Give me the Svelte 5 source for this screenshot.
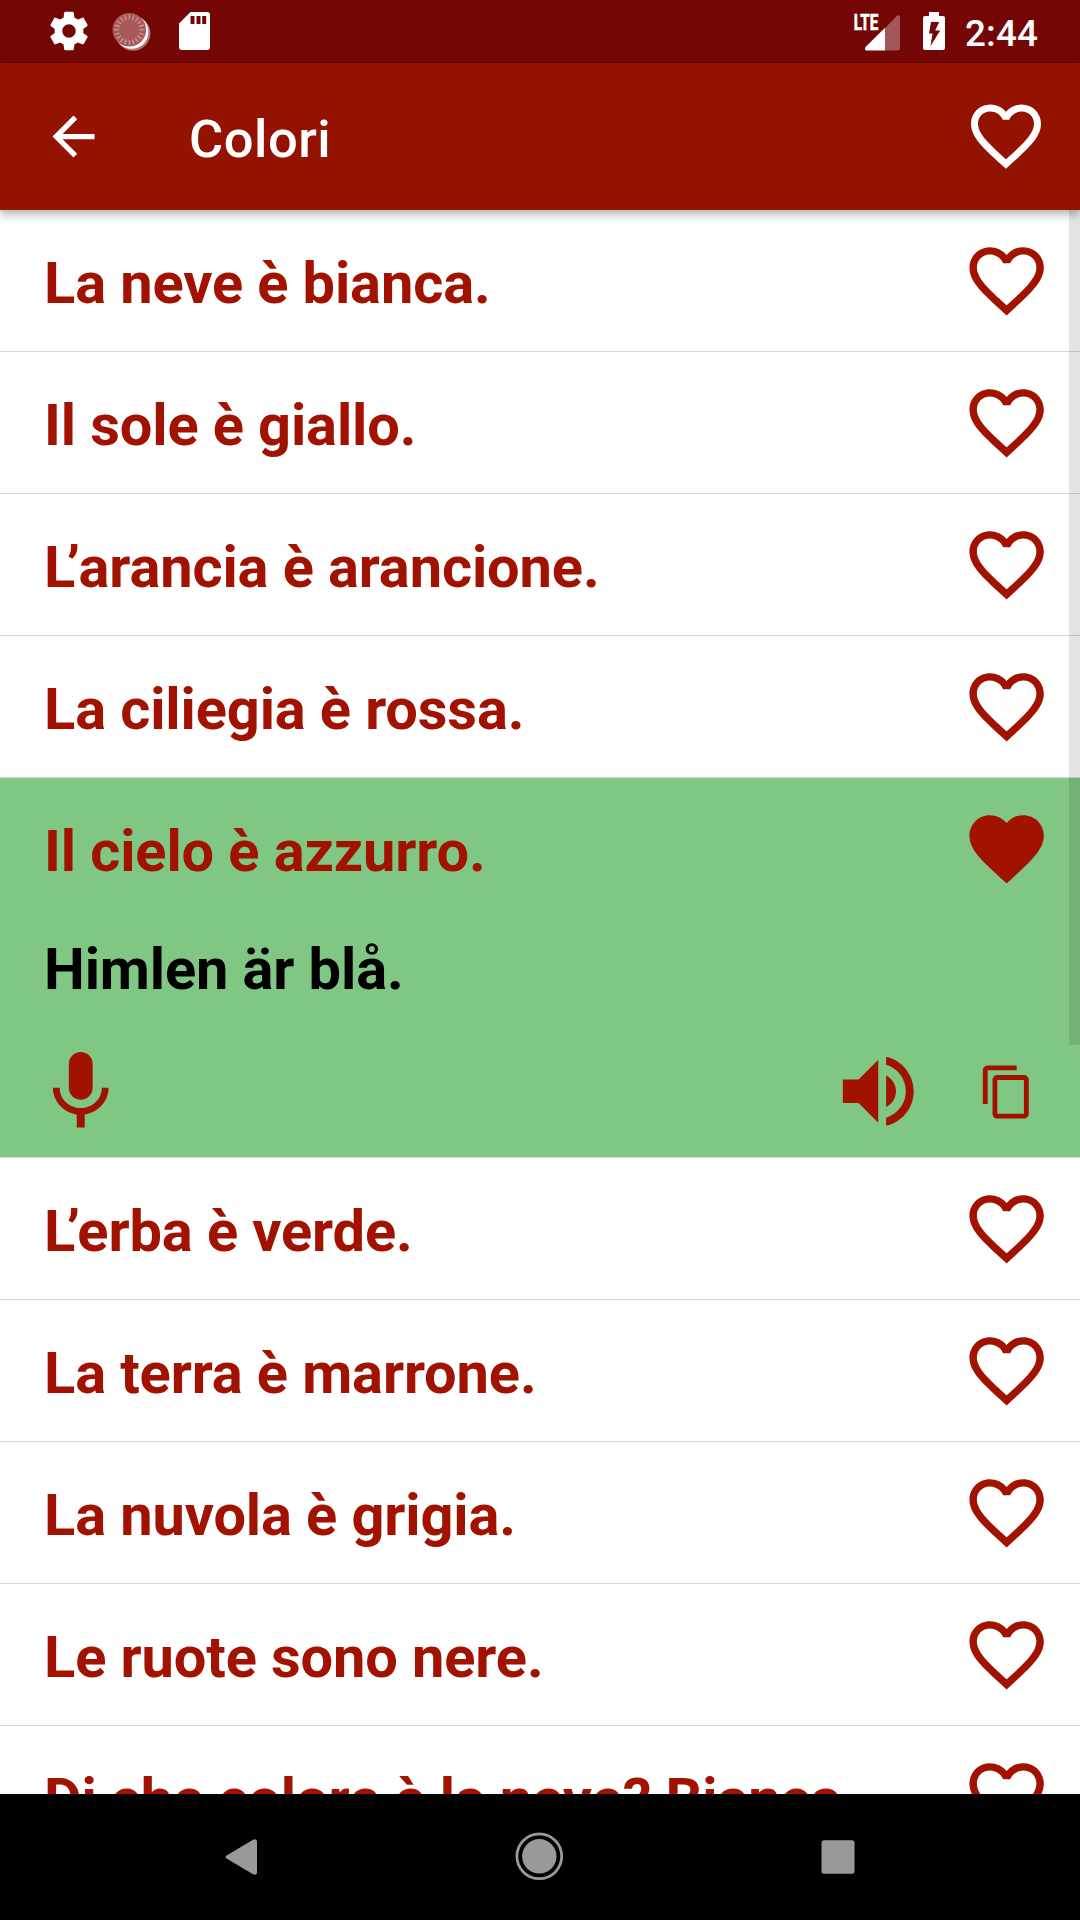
<script lang="ts">
  type Phrase = { text: string; translation?: string };

  const phrases: Phrase[] = [
    { text: 'La neve è bianca.' },
    { text: 'Il sole è giallo.' },
    { text: 'L’arancia è arancione.' },
    { text: 'La ciliegia è rossa.' },
    { text: 'Il cielo è azzurro.', translation: 'Himlen är blå.' },
    { text: 'L’erba è verde.' },
    { text: 'La terra è marrone.' },
    { text: 'La nuvola è grigia.' },
    { text: 'Le ruote sono nere.' },
    { text: 'Di che colore è la neve? Bianca.' },
  ];

  const ticks = Array.from({ length: 20 }, (_, i) => i * 18);
</script>

{#snippet heart(filled: boolean)}
  <svg class="heart" viewBox="0 0 24 24" aria-hidden="true">
    {#if filled}
      <path d="M12 21.35l-1.45-1.32C5.4 15.36 2 12.28 2 8.5 2 5.42 4.42 3 7.5 3c1.74 0 3.41.81 4.5 2.09C13.09 3.81 14.76 3 16.5 3 19.58 3 22 5.42 22 8.5c0 3.78-3.4 6.86-8.55 11.54L12 21.35z" />
    {:else}
      <path d="M16.5 3c-1.74 0-3.41.81-4.5 2.09C10.91 3.81 9.24 3 7.5 3 4.42 3 2 5.42 2 8.5c0 3.78 3.4 6.86 8.55 11.54L12 21.35l1.45-1.32C18.6 15.36 22 12.28 22 8.5 22 5.42 19.58 3 16.5 3zm-4.4 15.55l-.1.1-.1-.1C7.14 14.24 4 11.39 4 8.5 4 6.5 5.5 5 7.5 5c1.54 0 3.04.99 3.57 2.36h1.87C13.46 5.99 14.96 5 16.5 5c2 0 3.5 1.5 3.5 3.5 0 2.89-3.14 5.74-7.9 10.05z" />
    {/if}
  </svg>
{/snippet}

<div class="screen">
  <div class="status">
    <svg class="gear" viewBox="0 0 24 24">
      <path d="M19.43 12.98c.04-.32.07-.64.07-.98s-.03-.66-.07-.98l2.11-1.65c.19-.15.24-.42.12-.64l-2-3.46c-.12-.22-.39-.3-.61-.22l-2.49 1c-.52-.4-1.08-.73-1.69-.98l-.38-2.65C14.46 2.18 14.25 2 14 2h-4c-.25 0-.46.18-.49.42l-.38 2.65c-.61.25-1.17.59-1.69.98l-2.49-1c-.23-.09-.49 0-.61.22l-2 3.46c-.13.22-.07.49.12.64l2.11 1.65c-.04.32-.07.65-.07.98s.03.66.07.98l-2.11 1.65c-.19.15-.24.42-.12.64l2 3.46c.12.22.39.3.61.22l2.49-1c.52.4 1.08.73 1.69.98l.38 2.65c.03.24.24.42.49.42h4c.25 0 .46-.18.49-.42l.38-2.65c.61-.25 1.17-.59 1.69-.98l2.49 1c.23.09.49 0 .61-.22l2-3.46c.12-.22.07-.49-.12-.64l-2.11-1.65zM12 15.5c-1.93 0-3.5-1.57-3.5-3.5s1.57-3.5 3.5-3.5 3.5 1.57 3.5 3.5-1.57 3.5-3.5 3.5z" />
    </svg>
    <svg class="sync" viewBox="0 0 40 40">
      <circle cx="21" cy="21.3" r="17.4" opacity=".45" />
      <circle cx="19.6" cy="20" r="16.8" />
      <circle class="disc" cx="17.3" cy="17.8" r="16.8" />
      {#each ticks as angle}
        <path class="tick" d="M17.300 2.600v5" transform="rotate({angle} 17.3 17.8)" />
      {/each}
    </svg>
    <svg class="card" viewBox="0 0 31 38">
      <path fill-rule="evenodd" d="M11.5 0H28a3 3 0 0 1 3 3v32a3 3 0 0 1-3 3H3a3 3 0 0 1-3-3V11.5zM11.5 4v8h4V4zm6 0v8h4V4zm5.700 0v8h4V4z" />
    </svg>
    <span class="spacer"></span>
    <svg class="signal" viewBox="0 0 47 38">
      <path opacity=".33" d="M31 15L42.500 3.200Q46 .6 46 4.500V35q0 2.500-2.500 2.500H31z" />
      <path d="M31 14.800v22.700H12q-2-1.500 0-4z" />
      <text x="-.3" y="17.200" textLength="24.500" lengthAdjust="spacingAndGlyphs">LTE</text>
    </svg>
    <svg class="battery" viewBox="0 0 22 38">
      <path fill-rule="evenodd" d="M6 0h10v4h4a2 2 0 0 1 2 2v30a2 2 0 0 1-2 2H2a2 2 0 0 1-2-2V6a2 2 0 0 1 2-2h4zM8 10L6 21.500h3.500L7.500 34 17.200 18.500h-5L16.200 10z" />
    </svg>
    <span class="time">2:44</span>
  </div>

  <header>
    <svg class="back" viewBox="0 0 24 24"><path d="M20 11H7.830l5.590-5.590L12 4l-8 8 8 8 1.410-1.410L7.830 13H20v-2z" /></svg>
    <h1>Colori</h1>
    {@render heart(false)}
  </header>

  <main>
    {#each phrases as phrase}
      <article class:open={phrase.translation}>
        <div class="line">
          {#if phrase.text.startsWith('L’')}
            <p><span class="elided">L</span>{phrase.text.slice(1)}</p>
          {:else}
            <p>{phrase.text}</p>
          {/if}
          {@render heart(!!phrase.translation)}
        </div>
        {#if phrase.translation}
          <p class="translation">{phrase.translation}</p>
          <div class="actions">
            <svg class="mic" viewBox="0 0 24 24"><path d="M12 14c1.660 0 2.990-1.340 2.990-3L15 5c0-1.660-1.340-3-3-3S9 3.340 9 5v6c0 1.660 1.340 3 3 3zm5.300-3c0 3-2.540 5.100-5.300 5.100S6.700 14 6.700 11H5c0 3.410 2.720 6.230 6 6.720V21h2v-3.280c3.280-.48 6-3.300 6-6.720h-1.700z" /></svg>
            <span class="spacer"></span>
            <svg class="volume" viewBox="0 0 24 24"><path d="M3 9v6h4l5 5V4L7 9H3zm13.500 3c0-1.770-1.020-3.290-2.500-4.030v8.050c1.480-.73 2.500-2.250 2.500-4.020zM14 3.230v2.060c2.890.86 5 3.540 5 6.710s-2.110 5.850-5 6.710v2.060c4.010-.91 7-4.490 7-8.770s-2.990-7.860-7-8.770z" /></svg>
            <svg class="copy" viewBox="0 0 24 24"><path d="M16 1H4c-1.100 0-2 .9-2 2v14h2V3h12V1zm3 4H8c-1.100 0-2 .9-2 2v14c0 1.100.9 2 2 2h11c1.100 0 2-.9 2-2V7c0-1.100-.9-2-2-2zm0 16H8V7h11v14z" /></svg>
          </div>
        {/if}
      </article>
    {/each}
    <div class="scrollbar"></div>
  </main>

  <nav>
    <svg viewBox="0 0 50 50"><path d="M10.600 23.600L37 7.800q3.800-1.500 4 1.700v31q-.2 3.200-4 1.700L10.600 26.500q-2.200-1.400 0-2.900z" /></svg>
    <svg viewBox="0 0 50 50"><circle cx="24.300" cy="24.300" r="17.200" /><circle class="ring" cx="24.300" cy="24.300" r="22.400" /></svg>
    <svg viewBox="0 0 50 50"><rect x="8.500" y="8.300" width="33" height="33.400" rx="2.500" /></svg>
  </nav>
</div>

<style>
  :global(body) {
    margin: 0;
    overflow: hidden;
  }
  .screen {
    width: 1080px;
    height: 1920px;
    display: flex;
    flex-direction: column;
    background: #fff;
    font-family: Roboto, sans-serif;
    overflow: hidden;
  }
  svg {
    display: block;
    flex: none;
    fill: currentColor;
  }
  .spacer {
    flex: 1;
  }

  .status {
    height: 63px;
    flex: none;
    box-sizing: border-box;
    display: flex;
    align-items: flex-start;
    padding: 0 41px 0 45.500px;
    background: #750606;
    color: #fff;
  }
  .gear {
    width: 46px;
    height: 46px;
    margin-top: 8.300px;
  }
  .sync {
    width: 40px;
    height: 40px;
    margin: 11.500px 0 0 20.500px;
  }
  .disc {
    fill: #a85a5a;
  }
  .tick {
    stroke: #cfa0a0;
    stroke-width: 1.100;
  }
  .card {
    width: 31px;
    height: 38px;
    margin: 12.300px 0 0 27px;
  }
  .signal {
    width: 47px;
    height: 38px;
    margin: 12.500px 22px 0 0;
    overflow: visible;
  }
  .signal text {
    font-size: 22.500px;
    font-weight: 700;
    stroke: currentColor;
    stroke-width: 0.700;
  }
  .battery {
    width: 22px;
    height: 38px;
    margin: 12px 20px 0 0;
  }
  .time {
    width: 74px;
    margin-top: 11.500px;
    font-size: 36.750px;
    line-height: 43px;
    font-weight: 500;
    letter-spacing: 0.200px;
    white-space: nowrap;
  }

  header {
    position: relative;
    z-index: 1;
    height: 147px;
    flex: none;
    box-sizing: border-box;
    display: flex;
    align-items: center;
    padding: 0 32px 0 42px;
    background: #931300;
    color: #fff;
    box-shadow: 0 4px 9px rgba(0, 0, 0, 0.32);
  }
  .back {
    width: 63px;
    height: 63px;
  }
  h1 {
    flex: 1;
    margin: 5px 0 0 84px;
    font-size: 52.500px;
    line-height: 62px;
    font-weight: 500;
    letter-spacing: 0.500px;
  }
  header .heart {
    width: 84px;
    height: 84px;
    margin-bottom: 2px;
  }

  main {
    position: relative;
    flex: 1;
    min-height: 0;
    overflow: hidden;
    color: #a11200;
  }
  article {
    border-bottom: 1px solid #d6d6d6;
  }
  .open {
    height: 379px;
    background: #81c784;
  }
  .line {
    height: 141px;
    box-sizing: border-box;
    display: flex;
    align-items: flex-start;
    justify-content: space-between;
    padding: 26px 29px 0 44px;
  }
  p {
    margin: 13px 0 0;
    font-size: 57.750px;
    line-height: 68px;
    font-weight: 700;
    letter-spacing: -0.110px;
    white-space: nowrap;
  }
  /* Tucks the apostrophe over the foot of the L. */
  .elided {
    letter-spacing: -8.500px;
  }
  .line .heart {
    width: 89.250px;
    height: 89.250px;
    margin-top: -0.300px;
  }
  .translation {
    margin: 16px 44px 0;
    color: #000;
  }
  .actions {
    display: flex;
    align-items: flex-start;
    padding: 41px 44px 0 33px;
  }
  .mic {
    width: 95.500px;
    height: 95.500px;
  }
  .volume {
    width: 94.500px;
    height: 94.500px;
    margin-right: 52.500px;
  }
  .copy {
    width: 58px;
    height: 58px;
    margin-top: 18.600px;
  }
  .scrollbar {
    position: absolute;
    top: 0;
    right: 0;
    width: 11px;
    height: 835px;
    background: rgba(0, 0, 0, 0.106);
  }

  nav {
    height: 126px;
    flex: none;
    box-sizing: border-box;
    display: flex;
    align-items: center;
    justify-content: space-between;
    padding: 0 217px 0 216px;
    background: #000;
    color: #999;
  }
  nav svg {
    width: 50px;
    height: 50px;
  }
  .ring {
    fill: none;
    stroke: currentColor;
    stroke-width: 2.800;
  }
</style>
